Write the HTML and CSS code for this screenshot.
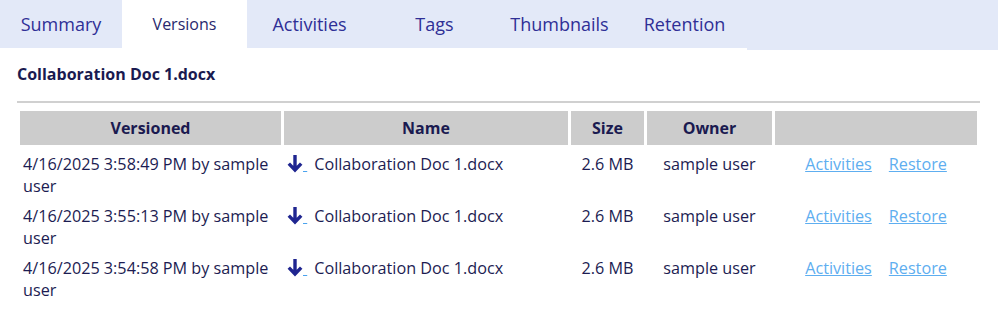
FILE: index.html
```html
<!DOCTYPE html>
<html>
<head lang="en">
    <meta charset="UTF-8">
    <title>Versions</title>
    <link rel="stylesheet" href="styles.css">
</head>
<body>
<div class="tabs">
    <ul class="tablist">
        <li class="first"><a href="#">Summary</a></li>
        <li class="active"><a href="#">Versions</a></li>
        <li><a href="#">Activities</a></li>
        <li><a href="#">Tags</a></li>
        <li><a href="#">Thumbnails</a></li>
        <li><a href="#">Retention</a></li>
    </ul>
    <div class="filler"></div>
</div>
<div class="panel">
    <h3>Collaboration Doc 1.docx</h3>
    <hr/>
    <table class="versions">
        <thead>
        <tr>
            <th class="c-ver">Versioned</th>
            <th class="c-name">Name</th>
            <th class="c-size">Size</th>
            <th class="c-owner">Owner</th>
            <th class="c-act"></th>
        </tr>
        </thead>
        <tbody>
        <tr>
            <td>4/16/2025 3:58:49 PM by sample user</td>
            <td class="name"><a class="dl" href="#"><svg width="16" height="19" viewBox="0 0 16 19"><path d="M8 1V16M1.8 9.6l6.2 6.4 6.2-6.4" fill="none" stroke="#1f2590" stroke-width="3.4"/></svg>&nbsp;</a><span class="fname">Collaboration Doc 1.docx</span></td>
            <td class="mid">2.6 MB</td>
            <td class="mid">sample user</td>
            <td class="mid"><a class="lnk" href="#">Activities</a><a class="lnk" href="#">Restore</a></td>
        </tr>
        <tr>
            <td>4/16/2025 3:55:13 PM by sample user</td>
            <td class="name"><a class="dl" href="#"><svg width="16" height="19" viewBox="0 0 16 19"><path d="M8 1V16M1.8 9.6l6.2 6.4 6.2-6.4" fill="none" stroke="#1f2590" stroke-width="3.4"/></svg>&nbsp;</a><span class="fname">Collaboration Doc 1.docx</span></td>
            <td class="mid">2.6 MB</td>
            <td class="mid">sample user</td>
            <td class="mid"><a class="lnk" href="#">Activities</a><a class="lnk" href="#">Restore</a></td>
        </tr>
        <tr>
            <td>4/16/2025 3:54:58 PM by sample user</td>
            <td class="name"><a class="dl" href="#"><svg width="16" height="19" viewBox="0 0 16 19"><path d="M8 1V16M1.8 9.6l6.2 6.4 6.2-6.4" fill="none" stroke="#1f2590" stroke-width="3.4"/></svg>&nbsp;</a><span class="fname">Collaboration Doc 1.docx</span></td>
            <td class="mid">2.6 MB</td>
            <td class="mid">sample user</td>
            <td class="mid"><a class="lnk" href="#">Activities</a><a class="lnk" href="#">Restore</a></td>
        </tr>
        </tbody>
    </table>
</div>
</body>
</html>
```
FILE: styles.css
```css
*{padding:0;margin:0;}
body{font-family:"Open Sans","Liberation Sans",sans-serif;color:#1c1c52;background:#fff;}

/*tabs*/
.tabs{display:flex;align-items:flex-start;}
.tablist{list-style:none;display:flex;}
.tablist li{width:125px;height:48px;background:#e3e9f8;display:flex;align-items:center;justify-content:center;}
.tablist li.first{width:122px;}
.tablist li a{text-decoration:none;color:#2f2f96;font-size:18px;line-height:48px;}
.tablist li.active{background:#fff;}
.tablist li.active a{font-size:16px;color:#28286e;}
.tabs .filler{flex:1;height:50px;background:#e3e9f8;}

.panel{padding:0 18px 0 17px;}
.panel h3{font-size:16px;font-weight:bold;color:#1a1a50;margin-top:13px;line-height:22px;}
.panel hr{border:0;border-top:2px solid #d0d0d0;margin-top:16px;}

/*table*/
.versions{border-spacing:3px;margin-top:5px;width:963px;table-layout:fixed;font-size:16.2px;}
.versions th{box-sizing:border-box;background:#cccccc;height:34px;font-size:16px;font-weight:bold;color:#1a1a50;padding:0;}
.c-ver{width:261px;}
.c-name{width:284px;}
.c-size{width:73px;}
.c-owner{width:125px;}
.versions td{vertical-align:top;padding:5px 3px 0 3px;line-height:22px;}
.versions td.mid{text-align:center;}
.versions td.name{padding-left:3px;}
.dl{color:#4aa3ee;text-decoration:underline;}
.dl svg{vertical-align:-3px;}
.fname{margin-left:7px;}
.lnk{color:#5eaef0;text-decoration:underline;margin:0 8.5px;}
```
